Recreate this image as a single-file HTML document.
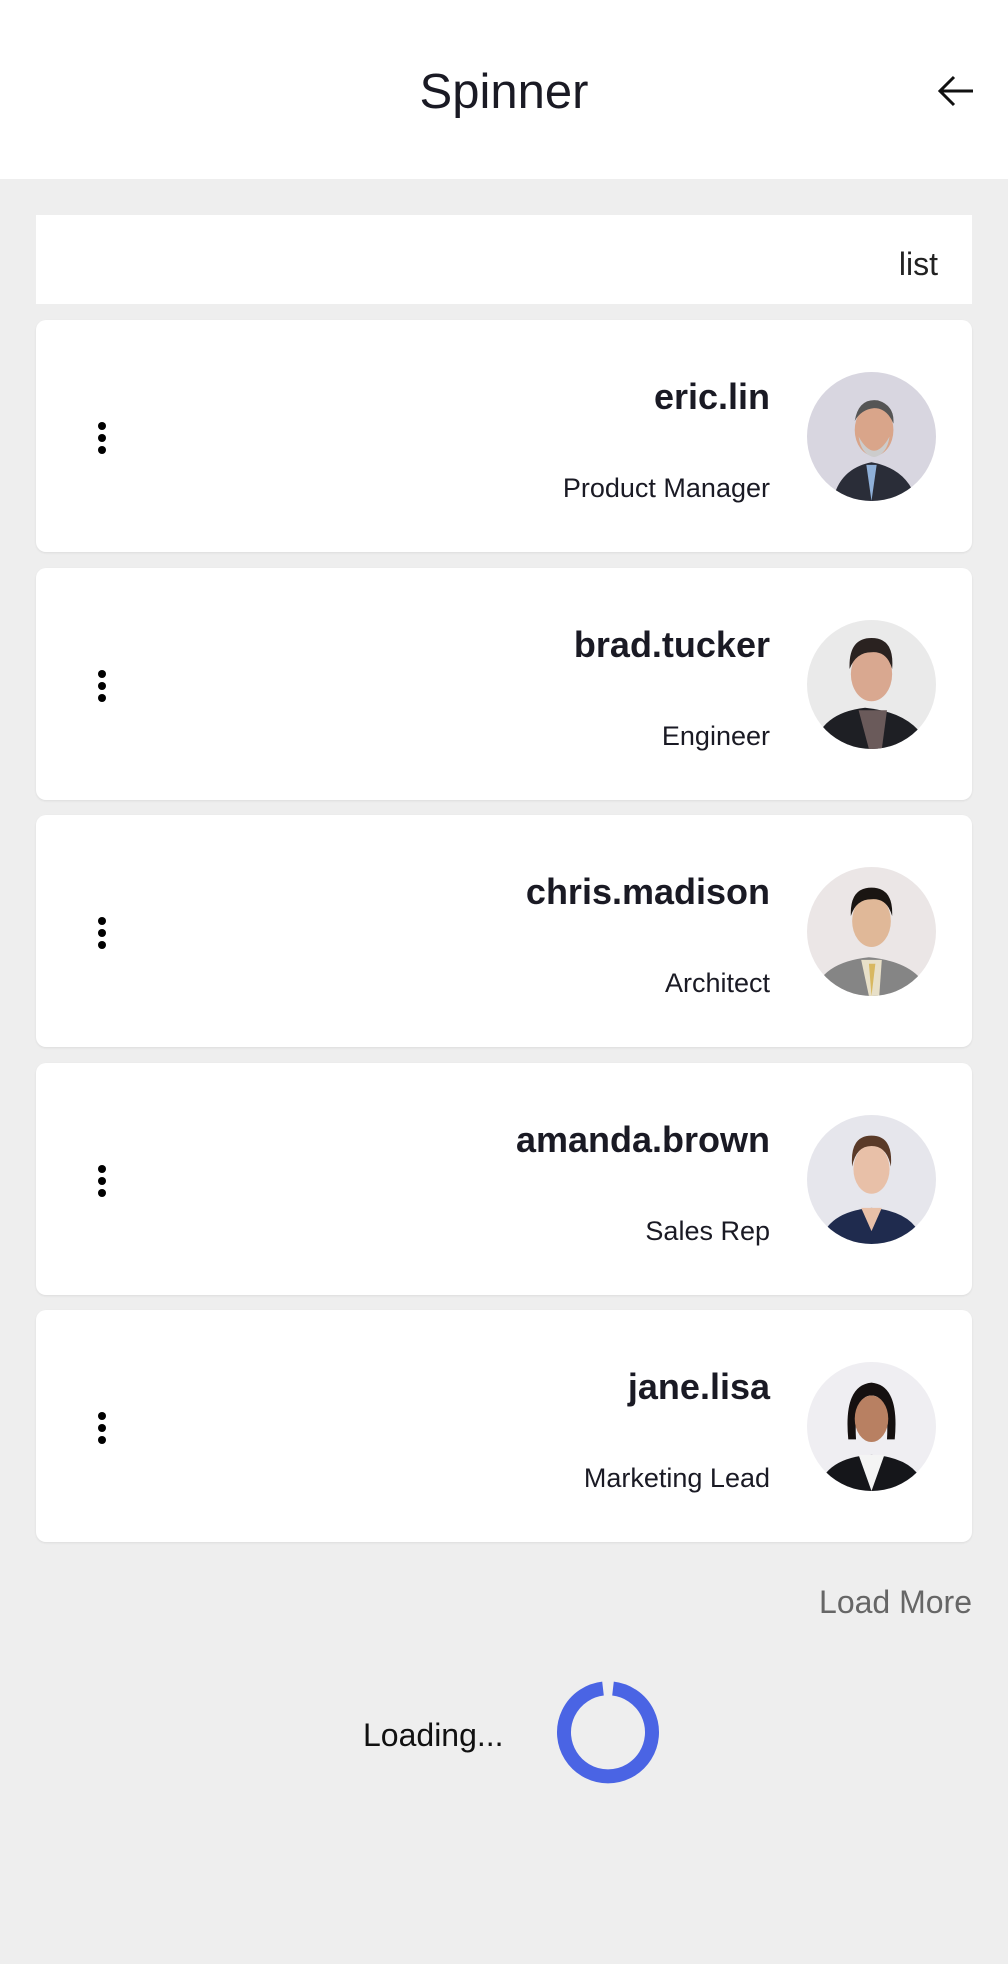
<!DOCTYPE html>
<html><head><meta charset="utf-8"><style>
*{margin:0;padding:0;box-sizing:border-box}
body{width:1008px;height:1964px;background:#eeeeee;font-family:"Liberation Sans",sans-serif;position:relative;overflow:hidden;color:#1a1a24}
.hdr{position:absolute;left:0;top:0;width:1008px;height:179px;background:#fff}
.title{position:absolute;left:0;width:1008px;top:64px;text-align:center;font-size:49px;color:#1a1a24}
.list{position:absolute;left:36px;top:215px;width:936px;height:89px;background:#fff}
.list span{position:absolute;right:34px;top:31px;font-size:32px;color:#222}
.card{position:absolute;left:36px;width:936px;height:232px;background:#fff;border-radius:10px;box-shadow:0 1px 2px rgba(0,0,0,.08)}
.name{position:absolute;right:202px;top:56px;font-size:36px;font-weight:bold;color:#1a1a24}
.sub{position:absolute;right:202px;top:153px;font-size:27px;color:#1a1a24}
.dots{position:absolute;left:62px;top:102px;width:8px}
.dots i{display:block;width:8px;height:8px;border-radius:50%;background:#000;margin-bottom:4px}
.av{position:absolute;left:771px;top:52px;width:129px;height:129px;border-radius:50%;overflow:hidden}
.lm{position:absolute;right:36px;top:1584px;font-size:32px;color:#666}
.ld{position:absolute;left:363px;top:1717px;font-size:32px;color:#111}
</style></head><body>
<div class="hdr"><div class="title">Spinner</div>
<svg style="position:absolute;left:935px;top:72px" width="40" height="40" viewBox="0 0 40 40"><path d="M38 19H5M19 5L5 19L19 33" fill="none" stroke="#111" stroke-width="3"/></svg></div>
<div class="list"><span>list</span></div>

<div class="card" style="top:320px"><div class="dots"><i></i><i></i><i></i></div><div class="name">eric.lin</div><div class="sub">Product Manager</div>
<svg class="av" viewBox="0 0 100 100"><rect width="100" height="100" fill="#d8d6e0"/><path d="M20 100Q25 75 50 70Q78 75 85 100Z" fill="#2a2d38"/><path d="M46 72L50 100L54 72Z" fill="#8fb0d8"/><ellipse cx="52" cy="45" rx="15" ry="20" fill="#d9a58a"/><path d="M40 50Q52 72 64 50Q62 64 52 66Q42 64 40 50Z" fill="#ccc"/><path d="M37 38Q40 20 55 22Q68 26 67 40Q62 28 52 28Q42 29 37 38Z" fill="#555"/></svg></div>

<div class="card" style="top:568px"><div class="dots"><i></i><i></i><i></i></div><div class="name">brad.tucker</div><div class="sub">Engineer</div>
<svg class="av" viewBox="0 0 100 100"><rect width="100" height="100" fill="#eaeaea"/><path d="M5 100Q10 72 45 68Q85 72 95 100Z" fill="#1e1f24"/><path d="M40 70L48 100L58 100L62 70Z" fill="#6a5a5a"/><ellipse cx="50" cy="42" rx="16" ry="21" fill="#d9a890"/><path d="M33 38Q32 14 50 14Q68 14 66 38Q62 24 50 25Q38 25 33 38Z" fill="#2a2220"/></svg></div>

<div class="card" style="top:815px"><div class="dots"><i></i><i></i><i></i></div><div class="name">chris.madison</div><div class="sub">Architect</div>
<svg class="av" viewBox="0 0 100 100"><rect width="100" height="100" fill="#ebe6e6"/><path d="M5 100Q10 74 48 70Q88 74 95 100Z" fill="#858585"/><path d="M42 72L48 100L56 100L58 72Z" fill="#e8e0c8"/><path d="M48 75L50 100L53 75Z" fill="#d8b860"/><ellipse cx="50" cy="42" rx="15" ry="20" fill="#e0b898"/><path d="M34 38Q33 16 50 16Q67 16 66 38Q62 24 50 25Q38 25 34 38Z" fill="#1a1512"/></svg></div>

<div class="card" style="top:1063px"><div class="dots"><i></i><i></i><i></i></div><div class="name">amanda.brown</div><div class="sub">Sales Rep</div>
<svg class="av" viewBox="0 0 100 100"><rect width="100" height="100" fill="#e6e6ec"/><path d="M10 100Q15 75 50 72Q85 75 90 100Z" fill="#1f2b4e"/><path d="M42 72L50 90L58 72Z" fill="#e8c0a8"/><ellipse cx="50" cy="42" rx="14" ry="19" fill="#e8c0a8"/><path d="M35 40Q33 16 50 16Q67 16 65 40Q62 24 50 24Q38 24 35 40Z" fill="#5a3a28"/></svg></div>

<div class="card" style="top:1310px"><div class="dots"><i></i><i></i><i></i></div><div class="name">jane.lisa</div><div class="sub">Marketing Lead</div>
<svg class="av" viewBox="0 0 100 100"><rect width="100" height="100" fill="#efeef2"/><path d="M8 100Q14 74 50 72Q86 74 92 100Z" fill="#15161a"/><path d="M40 72L50 100L60 72Z" fill="#f4f4f4"/><path d="M32 60Q28 18 50 16Q72 18 68 60L62 60Q64 26 50 26Q36 26 38 60Z" fill="#151010"/><ellipse cx="50" cy="44" rx="13" ry="18" fill="#b88062"/></svg></div>

<div class="lm">Load More</div>
<div class="ld">Loading...</div>
<svg style="position:absolute;left:553px;top:1677px" width="110" height="110" viewBox="0 0 110 110"><path d="M60 11.6A44 44 0 1 1 50 11.6" fill="none" stroke="#4a64e4" stroke-width="14"/></svg>
</body></html>
